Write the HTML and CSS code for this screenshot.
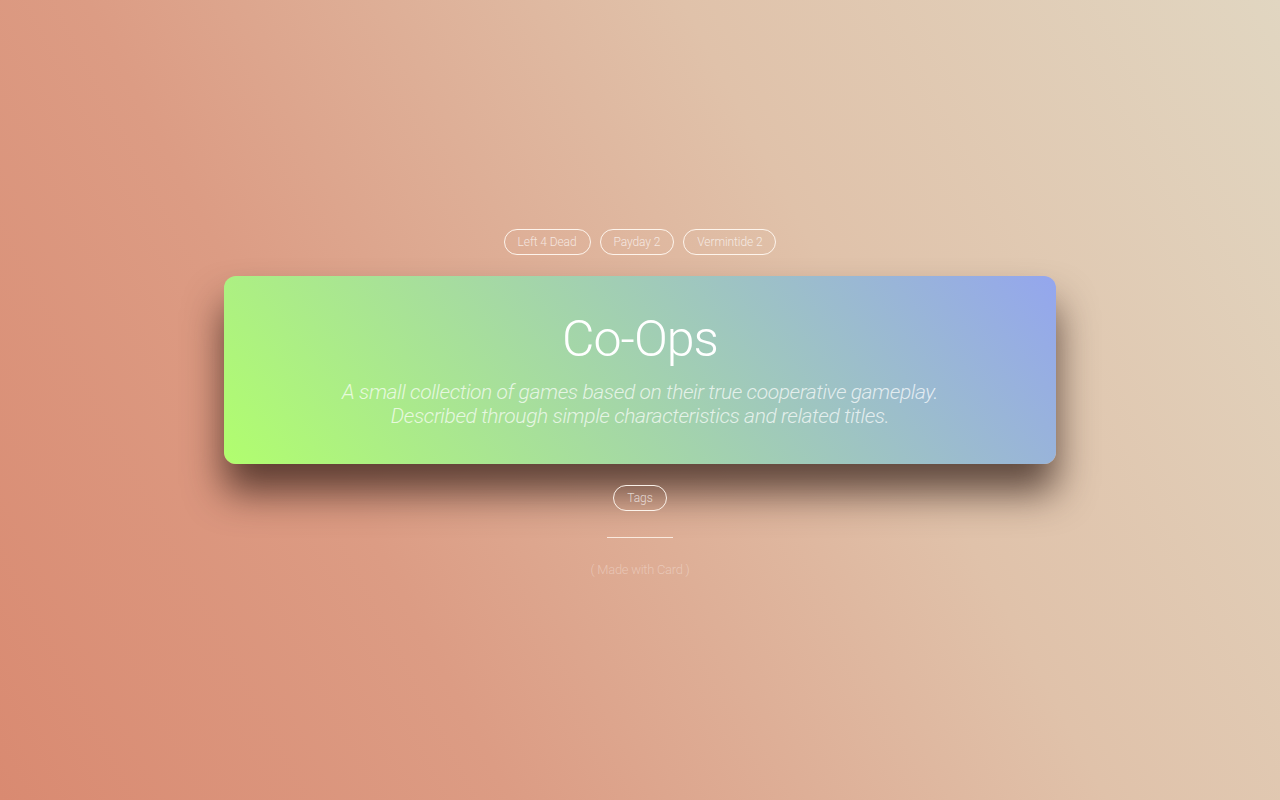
FILE: index.html
```html
<!DOCTYPE html>
<html lang="en">
<head>
<meta charset="utf-8">
<title>Co-Ops</title>
<link rel="stylesheet" href="styles.css">
</head>
<body>
<main class="page">
  <nav class="tags">
    <a class="pill">Left 4 Dead</a>
    <a class="pill">Payday 2</a>
    <a class="pill">Vermintide 2</a>
  </nav>
  <section class="card">
    <h1 class="title">Co-Ops</h1>
    <p class="subtitle">A small collection of games based on their true cooperative gameplay.<br>Described through simple characteristics and related titles.</p>
  </section>
  <a class="pill pill-tags">Tags</a>
  <hr class="rule">
  <p class="credit">( Made with Card )</p>
</main>
</body>
</html>
```

FILE: styles.css
```css
* { box-sizing: border-box; }
html, body { height: 100%; }
body {
  margin: 0;
  font-family: "Roboto", "Lato", sans-serif;
  font-weight: 300;
  background: linear-gradient(62deg, #d98a71 0%, #dc9c84 30%, #e0c2aa 65%, #e1d6c1 100%);
  color: #fff;
}
.page {
  height: 100%;
  display: flex;
  flex-direction: column;
  align-items: center;
  justify-content: center;
  padding-top: 5px;
}
.tags {
  display: flex;
  gap: 9px;
}
.pill {
  display: inline-flex;
  align-items: center;
  height: 26px;
  padding: 0 13px;
  border: 1px solid rgba(255, 248, 240, 0.95);
  border-radius: 13px;
  font-size: 12px;
  color: rgba(255, 255, 255, 0.7);
  letter-spacing: -0.1px;
}
.card {
  margin-top: 21px;
  width: 832px;
  height: 188px;
  border-radius: 12px;
  background: linear-gradient(50deg, #b1fe6e 0%, #94a6ee 100%);
  box-shadow: 0 28px 38px rgba(45, 25, 20, 0.72);
  text-align: center;
  padding-top: 33px;
}
.title {
  margin: 0;
  font-size: 50px;
  line-height: 60px;
  font-weight: 300;
  color: #fff;
  letter-spacing: -1px;
}
.subtitle {
  margin: 11px 0 0;
  font-size: 21px;
  line-height: 24px;
  font-style: italic;
  color: rgba(255, 255, 255, 0.72);
  letter-spacing: -0.4px;
}
.pill-tags {
  margin-top: 21px;
}
.rule {
  margin: 26px 0 0;
  width: 66px;
  border: 0;
  border-top: 1px solid rgba(255, 245, 235, 0.85);
  height: 0;
}
.credit {
  margin: 24px 0 0;
  font-size: 13px;
  color: rgba(255, 255, 255, 0.32);
  letter-spacing: -0.3px;
}
```
